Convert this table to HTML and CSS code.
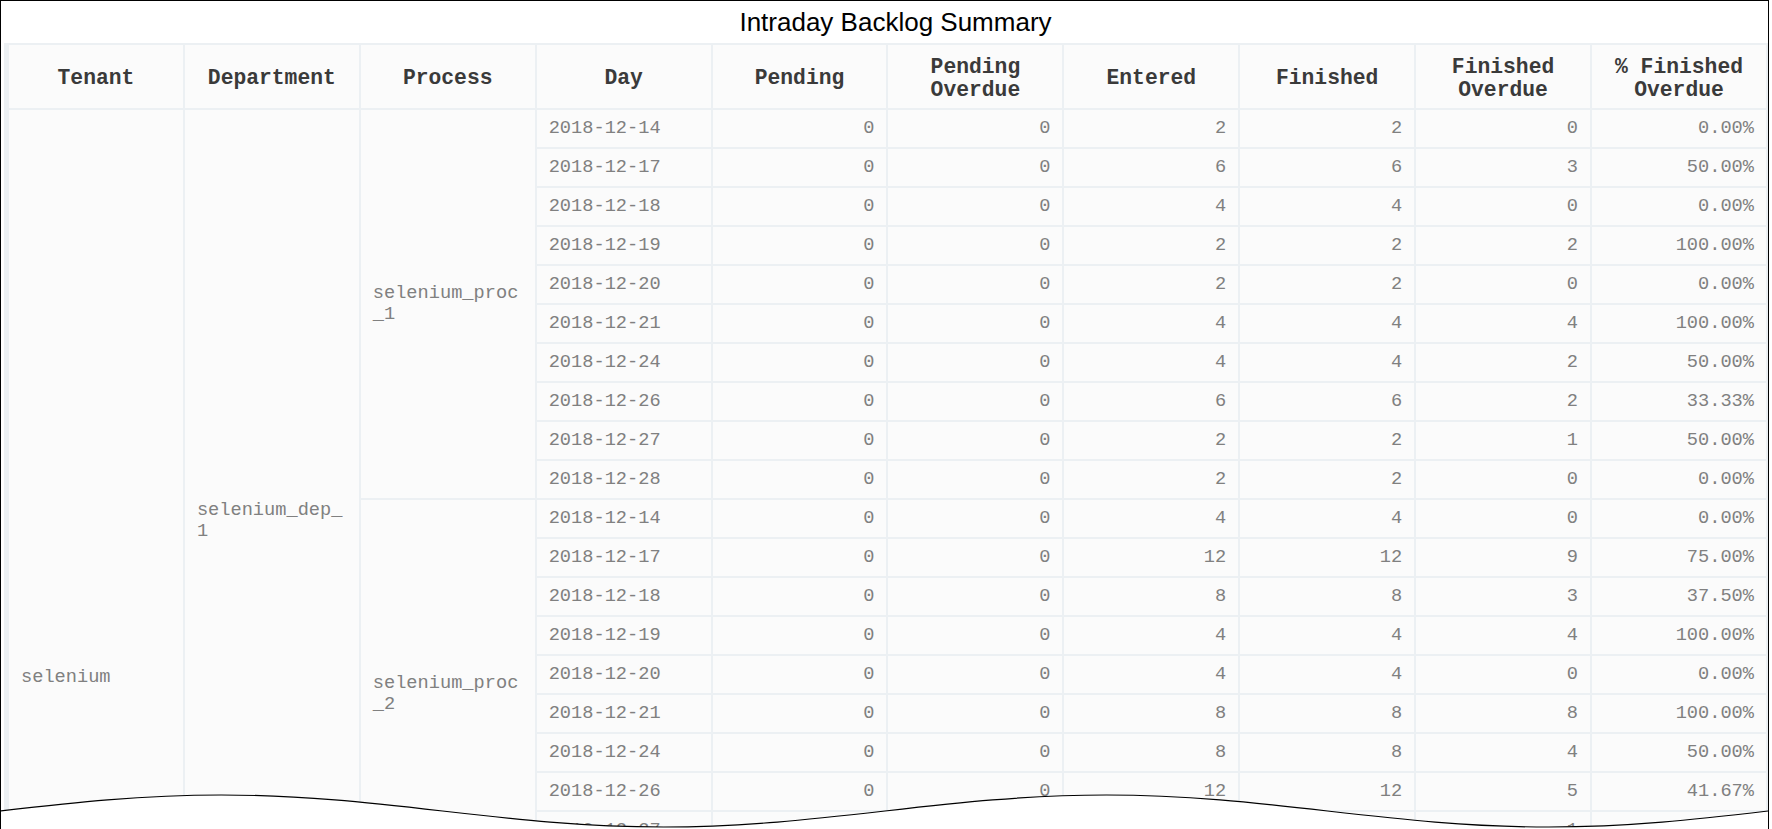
FILE: index.html
```html
<!DOCTYPE html>
<html>
<head>
<meta charset="utf-8">
<title>Intraday Backlog Summary</title>
<link rel="stylesheet" href="styles.css">
</head>
<body>
<div class="frame">
  <div class="title">Intraday Backlog Summary</div>
  <table class="grid">
    <thead>
      <tr>
        <th>Tenant</th>
        <th>Department</th>
        <th>Process</th>
        <th>Day</th>
        <th>Pending</th>
        <th>Pending Overdue</th>
        <th>Entered</th>
        <th>Finished</th>
        <th>Finished Overdue</th>
        <th>% Finished Overdue</th>
      </tr>
    </thead>
    <tbody>
      <tr><td class="group" rowspan="29">selenium</td><td class="group" rowspan="21">selenium_dep_1</td><td class="group" rowspan="10">selenium_proc_1</td><td class="date">2018-12-14</td><td class="num">0</td><td class="num">0</td><td class="num">2</td><td class="num">2</td><td class="num">0</td><td class="num">0.00%</td></tr>
      <tr><td class="date">2018-12-17</td><td class="num">0</td><td class="num">0</td><td class="num">6</td><td class="num">6</td><td class="num">3</td><td class="num">50.00%</td></tr>
      <tr><td class="date">2018-12-18</td><td class="num">0</td><td class="num">0</td><td class="num">4</td><td class="num">4</td><td class="num">0</td><td class="num">0.00%</td></tr>
      <tr><td class="date">2018-12-19</td><td class="num">0</td><td class="num">0</td><td class="num">2</td><td class="num">2</td><td class="num">2</td><td class="num">100.00%</td></tr>
      <tr><td class="date">2018-12-20</td><td class="num">0</td><td class="num">0</td><td class="num">2</td><td class="num">2</td><td class="num">0</td><td class="num">0.00%</td></tr>
      <tr><td class="date">2018-12-21</td><td class="num">0</td><td class="num">0</td><td class="num">4</td><td class="num">4</td><td class="num">4</td><td class="num">100.00%</td></tr>
      <tr><td class="date">2018-12-24</td><td class="num">0</td><td class="num">0</td><td class="num">4</td><td class="num">4</td><td class="num">2</td><td class="num">50.00%</td></tr>
      <tr><td class="date">2018-12-26</td><td class="num">0</td><td class="num">0</td><td class="num">6</td><td class="num">6</td><td class="num">2</td><td class="num">33.33%</td></tr>
      <tr><td class="date">2018-12-27</td><td class="num">0</td><td class="num">0</td><td class="num">2</td><td class="num">2</td><td class="num">1</td><td class="num">50.00%</td></tr>
      <tr><td class="date">2018-12-28</td><td class="num">0</td><td class="num">0</td><td class="num">2</td><td class="num">2</td><td class="num">0</td><td class="num">0.00%</td></tr>
      <tr><td class="group" rowspan="10">selenium_proc_2</td><td class="date">2018-12-14</td><td class="num">0</td><td class="num">0</td><td class="num">4</td><td class="num">4</td><td class="num">0</td><td class="num">0.00%</td></tr>
      <tr><td class="date">2018-12-17</td><td class="num">0</td><td class="num">0</td><td class="num">12</td><td class="num">12</td><td class="num">9</td><td class="num">75.00%</td></tr>
      <tr><td class="date">2018-12-18</td><td class="num">0</td><td class="num">0</td><td class="num">8</td><td class="num">8</td><td class="num">3</td><td class="num">37.50%</td></tr>
      <tr><td class="date">2018-12-19</td><td class="num">0</td><td class="num">0</td><td class="num">4</td><td class="num">4</td><td class="num">4</td><td class="num">100.00%</td></tr>
      <tr><td class="date">2018-12-20</td><td class="num">0</td><td class="num">0</td><td class="num">4</td><td class="num">4</td><td class="num">0</td><td class="num">0.00%</td></tr>
      <tr><td class="date">2018-12-21</td><td class="num">0</td><td class="num">0</td><td class="num">8</td><td class="num">8</td><td class="num">8</td><td class="num">100.00%</td></tr>
      <tr><td class="date">2018-12-24</td><td class="num">0</td><td class="num">0</td><td class="num">8</td><td class="num">8</td><td class="num">4</td><td class="num">50.00%</td></tr>
      <tr><td class="date">2018-12-26</td><td class="num">0</td><td class="num">0</td><td class="num">12</td><td class="num">12</td><td class="num">5</td><td class="num">41.67%</td></tr>
      <tr><td class="date">2018-12-27</td><td class="num">0</td><td class="num">0</td><td class="num">4</td><td class="num">4</td><td class="num">1</td><td class="num">25.00%</td></tr>
      <tr><td class="date">2018-12-28</td><td class="num">0</td><td class="num">0</td><td class="num">4</td><td class="num">4</td><td class="num">0</td><td class="num">0.00%</td></tr>
      <tr><td class="group" rowspan="1">selenium_proc_3</td><td class="date">2018-12-28</td><td class="num">0</td><td class="num">0</td><td class="num">2</td><td class="num">2</td><td class="num">0</td><td class="num">0.00%</td></tr>
      <tr><td class="group" rowspan="8">selenium_dep_2</td><td class="group" rowspan="8">selenium_proc_1</td><td class="date">2018-12-14</td><td class="num">0</td><td class="num">0</td><td class="num">2</td><td class="num">2</td><td class="num">0</td><td class="num">0.00%</td></tr>
      <tr><td class="date">2018-12-17</td><td class="num">0</td><td class="num">0</td><td class="num">6</td><td class="num">6</td><td class="num">3</td><td class="num">50.00%</td></tr>
      <tr><td class="date">2018-12-18</td><td class="num">0</td><td class="num">0</td><td class="num">4</td><td class="num">4</td><td class="num">0</td><td class="num">0.00%</td></tr>
      <tr><td class="date">2018-12-19</td><td class="num">0</td><td class="num">0</td><td class="num">2</td><td class="num">2</td><td class="num">2</td><td class="num">100.00%</td></tr>
      <tr><td class="date">2018-12-20</td><td class="num">0</td><td class="num">0</td><td class="num">2</td><td class="num">2</td><td class="num">0</td><td class="num">0.00%</td></tr>
      <tr><td class="date">2018-12-21</td><td class="num">0</td><td class="num">0</td><td class="num">4</td><td class="num">4</td><td class="num">4</td><td class="num">100.00%</td></tr>
      <tr><td class="date">2018-12-24</td><td class="num">0</td><td class="num">0</td><td class="num">4</td><td class="num">4</td><td class="num">2</td><td class="num">50.00%</td></tr>
      <tr><td class="date">2018-12-26</td><td class="num">0</td><td class="num">0</td><td class="num">6</td><td class="num">6</td><td class="num">2</td><td class="num">33.33%</td></tr>
    </tbody>
  </table>
  <svg class="tear" viewBox="0 0 1772 49" width="1772" height="49" aria-hidden="true">
    <path class="tear-fill" d="M0,31 C72.15,22.8 141.16,15 221.25,15 C301.34,15 370.35,22.8 442.5,31 C514.65,39.2 583.66,47 663.75,47 C743.84,47 812.85,39.2 885,31 C957.15,22.8 1026.16,15 1106.25,15 C1186.34,15 1255.35,22.8 1327.5,31 C1399.65,39.2 1468.66,47 1548.75,47 C1628.84,47 1697.85,39.2 1772,31 L1772,49 L0,49 Z"/>
    <path class="tear-line" d="M0,31 C72.15,22.8 141.16,15 221.25,15 C301.34,15 370.35,22.8 442.5,31 C514.65,39.2 583.66,47 663.75,47 C743.84,47 812.85,39.2 885,31 C957.15,22.8 1026.16,15 1106.25,15 C1186.34,15 1255.35,22.8 1327.5,31 C1399.65,39.2 1468.66,47 1548.75,47 C1628.84,47 1697.85,39.2 1768,31"/>
  </svg>
</div>
</body>
</html>
```

FILE: styles.css
```css
html, body {
  margin: 0;
  padding: 0;
  height: 829px;
  overflow: hidden;
  background: #ffffff;
}

.frame {
  position: relative;
  box-sizing: border-box;
  width: 1769px;
  height: 829px;
  border: 1px solid #000000;
  border-bottom: none;
  overflow: hidden;
  background: #ffffff;
}

.title {
  height: 42px;
  line-height: 42px;
  padding-left: 22px;
  text-align: center;
  font-family: "Liberation Sans", Arial, sans-serif;
  font-size: 26px;
  color: #000000;
}

.grid {
  margin-left: 3px;
  width: 1764px;
  table-layout: fixed;
  border-collapse: separate;
  border-spacing: 0;
  border-top: 2px solid #ecf0f3;
  border-left: 5px solid #ecf0f3;
  font-family: "Liberation Mono", "Courier New", monospace;
}

.grid th,
.grid td {
  background: #fbfbfb;
  border-right: 2px solid #ecf0f3;
  border-bottom: 2px solid #ecf0f3;
}

.grid th {
  height: 59px;
  padding: 4px 8px 0;
  font-size: 21.33px;
  line-height: 23px;
  font-weight: bold;
  color: #3a3a3a;
  text-align: center;
  vertical-align: middle;
}

.grid td {
  height: 37px;
  padding: 0 12px;
  font-size: 18.67px;
  line-height: 21px;
  color: #808080;
  vertical-align: middle;
  white-space: nowrap;
}

.grid td.group {
  text-align: left;
  white-space: normal;
  word-break: break-all;
}

.grid td.date {
  text-align: left;
}

.grid td.num {
  text-align: right;
}

.tear {
  position: absolute;
  left: -1px;
  top: 779px;
  display: block;
}

.tear-fill {
  fill: #ffffff;
  stroke: none;
}

.tear-line {
  fill: none;
  stroke: #000000;
  stroke-width: 1.2;
}
```
